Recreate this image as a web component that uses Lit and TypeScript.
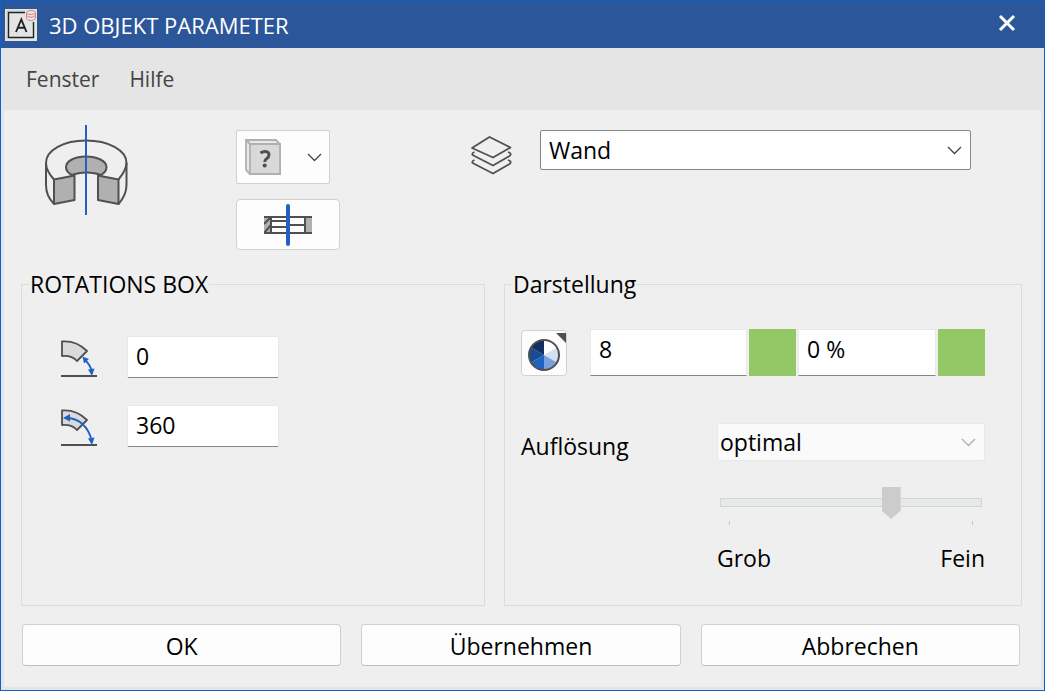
import { LitElement, html, css, svg } from "lit";
import { customElement, property } from "lit/decorators.js";

const chevron = html`<svg class="chevron" width="15" height="9" viewBox="0 0 15 9" aria-hidden="true">
  <path d="M1 1l6.5 6.5L14 1" fill="none" stroke="currentColor" stroke-width="1.3" />
</svg>`;

const arcShape = svg`<path d="M2 1.5C9 1 19 3 27 11L17 21C13 16.500 8 15.500 2 16Z" fill="#dadada" stroke="#505050" stroke-width="1.8" stroke-linejoin="round" />
  <path d="M1 36H37" stroke="#505050" stroke-width="2" />`;

@customElement("number-row")
export class NumberRow extends LitElement {
  @property() kind = "start";
  @property() value = "";
  @property() label = "";

  static styles = css`
    :host {
      display: block;
    }
    .row {
      display: flex;
      align-items: center;
      gap: 29px;
    }
    label {
      padding-top: 4px;
    }
    svg {
      display: block;
    }
    input {
      box-sizing: border-box;
      width: 152px;
      height: 42px;
      padding: 0 8px 2px;
      border: 1px solid #e8e8e8;
      border-bottom-color: #858585;
      border-radius: 2px;
      background: #fff;
      color: #000;
      font: inherit;
    }
  `;

  render() {
    return html`<div class="row">
      <label for="value" aria-label=${this.label}>
        <svg width="38" height="38" viewBox="0 0 38 38" aria-hidden="true">
          ${arcShape}
          ${this.kind === "start"
            ? svg`<path d="M25 20Q30.500 25 32 32" fill="none" stroke="#1f62c4" stroke-width="1.8" />
                <path d="M22.500 16.500l1.500 7 5-4.500zM32 36l-4-6.500 6.500-1z" fill="#1f62c4" />`
            : svg`<path d="M7 9Q26 10 32 32" fill="none" stroke="#1f62c4" stroke-width="1.8" />
                <path d="M3 9l7-4v7.500zM32 36l-4-6.500 6.500-1z" fill="#1f62c4" />`}
        </svg>
      </label>
      <input id="value" .value=${this.value} />
    </div>`;
  }
}

@customElement("app-root")
export class AppRoot extends LitElement {
  static styles = css`
    :host {
      display: block;
      color: #000;
      font: 23px/32px "Open Sans", "Noto Sans", sans-serif;
    }
    * {
      box-sizing: border-box;
    }
    svg {
      display: block;
    }
    button,
    input,
    select {
      font: inherit;
      color: inherit;
    }
    .window {
      display: flex;
      flex-direction: column;
      min-height: 100vh;
      border: 1px solid #0a63c9;
      background: #e5e5e5;
    }
    .title {
      display: flex;
      align-items: center;
      gap: 12px;
      height: 47px;
      padding: 0 28px 0 4px;
      background: #2b579a;
      color: #fff;
    }
    .title h1 {
      flex: 1;
      margin: 0;
      font-size: 22px;
      font-weight: 400;
      line-height: 32px;
    }
    .close {
      padding: 0;
      border: 0;
      margin-bottom: 4px;
      background: none;
    }
    .menu {
      display: flex;
      align-items: center;
      gap: 30px;
      height: 62px;
      padding: 0 25px;
    }
    .menu a {
      color: #444;
      font-size: 21px;
      text-decoration: none;
    }
    .body {
      flex: 1;
      display: flex;
      flex-direction: column;
      margin: 0 3px 3px;
      padding: 15px 19px 21px 17px;
      background: #efefef;
    }
    .head {
      display: grid;
      grid-template-columns: 464fr 518fr;
      gap: 19px;
    }
    .shape {
      display: flex;
      align-items: flex-start;
      gap: 107px;
      padding-left: 23px;
    }
    .tools {
      display: flex;
      flex-direction: column;
      align-items: flex-start;
      gap: 15px;
      padding-top: 5px;
    }
    .button {
      display: flex;
      align-items: center;
      justify-content: center;
      padding: 0;
      border: 1px solid #d0d0d0;
      border-radius: 4px;
      background: #fdfdfd;
    }
    .pick {
      gap: 26px;
      width: 94px;
      height: 54px;
      border-radius: 2px;
      color: #444;
    }
    .section {
      width: 104px;
      height: 51px;
    }
    .layer {
      display: flex;
      align-items: flex-start;
      gap: 28px;
      padding: 5px 51px 0 0;
      margin-left: -33px;
    }
    .layer label {
      padding-top: 6px;
    }
    .select {
      display: grid;
      flex: 1;
      align-items: center;
    }
    .select > * {
      grid-area: 1 / 1;
    }
    .select .chevron {
      justify-self: end;
      margin-right: 9px;
      pointer-events: none;
      color: #444;
    }
    select {
      width: 100%;
      height: 40px;
      padding: 0 8px;
      border: 1px solid #858585;
      border-radius: 2px;
      appearance: none;
      background: #fff;
    }
    .select select:disabled {
      height: 38px;
      padding: 0 2px;
      border-color: #e9e9e9;
      background: #fafafa;
      color: #000;
      opacity: 1;
    }
    .select select:disabled + .chevron {
      color: #b0b0b0;
    }
    .groups {
      flex: 1;
      display: grid;
      grid-template-columns: 464fr 518fr;
      gap: 19px;
      margin-top: 18px;
    }
    fieldset {
      min-width: 0;
      margin: 0;
      border: 1px solid #dcdcdc;
      padding: 0 36px 0 16px;
    }
    legend {
      margin-left: -9px;
      padding: 0 1px;
      line-height: 32px;
    }
    .numbers {
      display: grid;
      gap: 27px;
      padding: 36px 0 0 22px;
    }
    .colour {
      display: grid;
      grid-template-columns: 46px 178fr 47px 138fr 47px;
      column-gap: 2px;
      align-items: center;
      padding-top: 29px;
    }
    .wheel {
      width: 46px;
      height: 46px;
    }
    .colour input {
      width: 100%;
      min-width: 0;
      height: 47px;
      padding: 0 8px 8px;
      border: 1px solid #e8e8e8;
      border-bottom-color: #858585;
      background: #fff;
    }
    .colour .first {
      margin-left: 21px;
      width: auto;
    }
    .swatch {
      height: 47px;
      padding: 0;
      border: 0;
      background: #94c867;
    }
    .resolution {
      display: grid;
      grid-template-columns: 196fr 268fr;
      align-items: center;
      padding-top: 46px;
    }
    .resolution label {
      padding-top: 8px;
    }
    .scale {
      grid-column: 2;
      padding: 25px 3px 0;
    }
    .slider {
      display: block;
      width: 100%;
      height: 31px;
      margin: 0;
      appearance: none;
      background: none;
    }
    .slider::-webkit-slider-runnable-track {
      box-sizing: border-box;
      height: 9px;
      border: 1px solid #d3d5d5;
      background: #e5e9e9;
    }
    .slider::-webkit-slider-thumb {
      appearance: none;
      width: 19px;
      height: 32px;
      margin-top: -12px;
      background: #cccccc;
      clip-path: polygon(0 0, 100% 0, 100% 74%, 50% 100%, 0 74%);
    }
    .ticks {
      height: 4px;
      margin: 3px 9px 0;
      border: solid #c4c4c4;
      border-width: 0 1px;
    }
    .ends {
      grid-column: 2;
      display: flex;
      justify-content: space-between;
      padding-top: 17px;
    }
    .actions {
      display: grid;
      grid-template-columns: repeat(3, 1fr);
      gap: 20px;
      padding: 18px 2px 0 1px;
    }
    .actions .button {
      height: 42px;
      padding-top: 2px;
      border-bottom-color: #bdbdbd;
    }
  `;

  render() {
    return html`<div class="window">
      <header class="title">
        <svg width="32" height="32" viewBox="0 0 32 32" aria-hidden="true">
          <rect width="32" height="32" fill="#e4e4e4" />
          <path d="M20 3.500H3.500V28.500H28.500V13" fill="none" stroke="#222" stroke-width="1.400" />
          <path d="M20 2.300H2.300V29.700" fill="none" stroke="#aaa" stroke-width=".8" />
          <path d="M11 23L16.300 10.500L21.500 23M13 18.800H19.700" fill="none" stroke="#222" stroke-width="1.900" />
          <g fill="none" stroke="#dc8585" stroke-width="1">
            <ellipse cx="26" cy="3.500" rx="4.500" ry="2" />
            <path d="M21.500 3.500V9.500Q26 14 30.500 9.500V3.500M21.500 6.500Q26 10 30.500 6.500" />
          </g>
        </svg>
        <h1>3D OBJEKT PARAMETER</h1>
        <button class="close" aria-label="Schließen">
          <svg width="18" height="18" viewBox="0 0 18 18">
            <path d="M2 2l14 14M16 2L2 16" stroke="#fff" stroke-width="3" />
          </svg>
        </button>
      </header>
      <nav class="menu"><a href="#">Fenster</a><a href="#">Hilfe</a></nav>
      <main class="body">
        <div class="head">
          <div class="shape">
            <svg width="85" height="90" viewBox="0 0 85 90" aria-hidden="true">
              <g fill="none" stroke="#505050" stroke-width="2" stroke-linejoin="round">
                <path d="M10 79C6 75 2 68 2 60V38C2 25 20 15.500 42 15.500S82.500 25 82.500 38V60C82.500 68 78 75 74.500 79" />
                <path d="M2 38C2 44 5 49 10 54.500M82.500 38C82.500 44 79 49 74.500 54.500" />
                <path d="M28 50C24 48 22 45 22 42C22 36 31 31.500 42 31.500S62.500 36 62.500 42C62.500 45 60.500 48 57 50C49 46.500 36 46.500 28 50Z" fill="#b0b0b0" />
                <path d="M10 54.500L30.500 50.500V75L10 79Z" fill="#b0b0b0" />
                <path d="M54 50.500L74.500 54.500V79L54 75Z" fill="#b0b0b0" />
              </g>
              <path d="M42 0V90" stroke="#1f62c4" stroke-width="2" />
            </svg>
            <div class="tools">
              <button class="button pick" aria-label="Material">
                <svg width="36" height="36" viewBox="0 0 36 36">
                  <path d="M1 1H31L35 5V35H5L1 31Z" fill="#e8e8e8" stroke="#b0b0b0" stroke-width="1.800" />
                  <path d="M5 5H35V35H5ZM1 1L5 5" fill="#d9d9d9" stroke="#b0b0b0" stroke-width="1.800" />
                  <path d="M15.500 14Q18 12.200 20.500 12.400Q24 12.800 24 15.700Q24 18 21.800 19.500Q19.700 20.800 19.700 23" fill="none" stroke="#505050" stroke-width="3" />
                  <circle cx="19.700" cy="26.500" r="2.100" fill="#505050" />
                </svg>
                ${chevron}
              </button>
              <button class="button section" aria-label="Schnitt">
                <svg width="48" height="42" viewBox="0 0 48 42">
                  <path d="M0 12H7V29H0ZM41 12H48V29H41Z" fill="#b0b0b0" />
                  <path d="M0 20L7 13M0 29L7 21" stroke="#505050" stroke-width="2" />
                  <path d="M0 13H48M0 29H48M7 12V29M41 12V29M7 17H22M7 23H22M26 21H41" fill="none" stroke="#505050" stroke-width="2" />
                  <path d="M24 2V40" stroke="#1f62c4" stroke-width="4" stroke-linecap="round" />
                </svg>
              </button>
            </div>
          </div>
          <div class="layer">
            <label for="layer" aria-label="Ebene">
              <svg width="41" height="39" viewBox="0 0 41 39" aria-hidden="true">
                <g fill="none" stroke="#505050" stroke-width="1.800" stroke-linejoin="round">
                  <path d="M18.500 1L39.500 11.500L22 21.500L1 12Z" />
                  <path d="M3.500 16C1 17 .500 18.500 2.500 19.500L22 29.500L38.500 20C40.500 18.500 40 17 37 16" />
                  <path d="M3.500 24C1 25 .500 26.500 2.500 27.500L22 37.500L38.500 28C40.500 26.500 40 25 37 24" />
                </g>
              </svg>
            </label>
            <div class="select">
              <select id="layer"><option>Wand</option></select>
              ${chevron}
            </div>
          </div>
        </div>
        <div class="groups">
          <fieldset>
            <legend>ROTATIONS BOX</legend>
            <div class="numbers">
              <number-row kind="start" value="0" label="Startwinkel"></number-row>
              <number-row kind="sweep" value="360" label="Drehwinkel"></number-row>
            </div>
          </fieldset>
          <fieldset>
            <legend>Darstellung</legend>
            <div class="colour">
              <button class="button wheel" aria-label="Farbe wählen">
                <svg width="44" height="44" viewBox="0 0 44 44">
                  <path d="M34 2H44V12Z" fill="#505050" />
                  <path d="M22 24V9A15 15 0 0 1 35 16.500Z" fill="#fff" />
                  <path d="M22 24L35 16.500A15 15 0 0 1 35 31.500Z" fill="#d2e0f3" />
                  <path d="M22 24L35 31.500A15 15 0 0 1 22 39Z" fill="#7ba1dc" />
                  <path d="M22 24V39A15 15 0 0 1 9 31.500Z" fill="#1f62c4" />
                  <path d="M22 24L9 31.500A15 15 0 0 1 9 16.500Z" fill="#194b92" />
                  <path d="M22 24L9 16.500A15 15 0 0 1 22 9Z" fill="#12305f" />
                  <circle cx="22" cy="24" r="15" fill="none" stroke="#505050" stroke-width="2" />
                </svg>
              </button>
              <input class="first" aria-label="Farbe" .value=${"8"} />
              <button class="swatch" aria-label="Farbfeld"></button>
              <input aria-label="Transparenz" .value=${"0 %"} />
              <button class="swatch" aria-label="Transparenzfeld"></button>
            </div>
            <div class="resolution">
              <label for="resolution">Auflösung</label>
              <div class="select">
                <select id="resolution" disabled><option>optimal</option></select>
                ${chevron}
              </div>
              <div class="scale">
                <input class="slider" type="range" min="0" max="3" .value=${"2"} disabled aria-label="Auflösung" />
                <div class="ticks"></div>
              </div>
              <div class="ends"><span>Grob</span><span>Fein</span></div>
            </div>
          </fieldset>
        </div>
        <div class="actions">
          <button class="button">OK</button>
          <button class="button">Übernehmen</button>
          <button class="button">Abbrechen</button>
        </div>
      </main>
    </div>`;
  }
}
